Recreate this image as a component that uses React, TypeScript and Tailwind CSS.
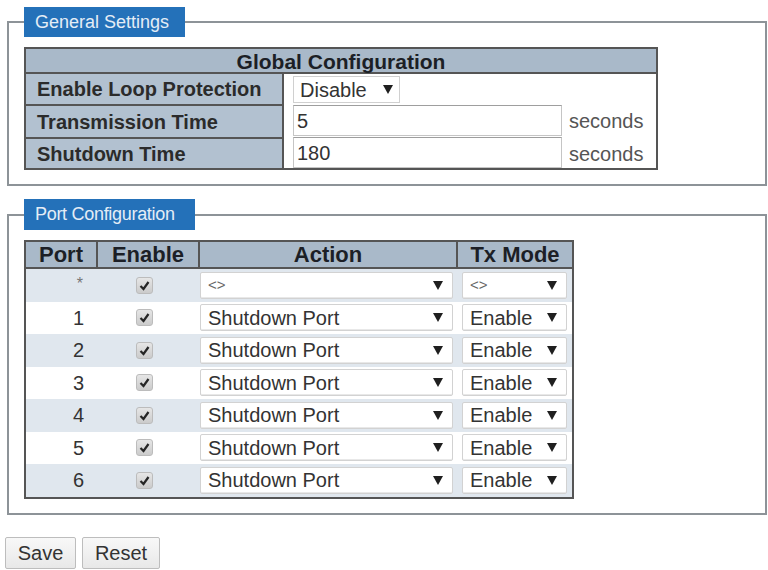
import React from "react";

const ports = ["1", "2", "3", "4", "5", "6"];

function Arrow() {
  return (
    <svg width="10" height="9" viewBox="0 0 10 9" className="shrink-0">
      <path d="M0 0h10L5 9z" fill="#1f1f1f" />
    </svg>
  );
}

function FakeSelect({ value, width, muted }: { value: string; width: string; muted?: boolean }) {
  return (
    <div
      className={`${width} h-[27px] flex items-center justify-between bg-white border border-[#d2d2d2] rounded-[2px] pl-[7px] pr-[9px] shadow-[inset_0_-1px_0_#e8e8e8]`}
    >
      <span className={muted ? "text-[15px] text-[#666]" : "text-[20px] text-[#333] leading-none"}>{value}</span>
      <Arrow />
    </div>
  );
}

function Check() {
  return (
    <span className="w-[17px] h-[17px] rounded-[3px] border border-[#bcbcbc] bg-[linear-gradient(#e6e6e6,#cbcbcb)] flex items-center justify-center">
      <svg width="13" height="13" viewBox="0 0 13 13">
        <path d="M2.5 7l3 3L10.5 3" stroke="#262626" strokeWidth="2.2" fill="none" />
      </svg>
    </span>
  );
}

export default function App() {
  return (
    <div className="w-[768px] h-[570px] overflow-hidden bg-white pt-[7px] pl-[7px] font-['Liberation_Sans',Arial,sans-serif] text-[#333]">
      {/* General Settings */}
      <fieldset className="w-[760px] border-2 border-[#8d9398] px-[15px] pt-[10px] pb-[14px]">
        <legend className="w-[161px] h-[30px] leading-[30px] pl-[11px] bg-[#2471b9] text-[#e4edf6] text-[18px]">
          General Settings
        </legend>
        <div className="w-[634px] border-2 border-[#555]">
          <div className="h-[25px] leading-[25px] bg-[#a9b9c9] border-b-2 border-[#555] text-center font-bold text-[21px] text-[#1c1f26]">
            Global Configuration
          </div>
          <div className="flex h-[30px]">
            <div className="w-[258px] bg-[#b2c1d0] border-r-2 border-[#555] pl-[11px] flex items-center font-bold text-[20px] text-[#2b2b2b]">
              Enable Loop Protection
            </div>
            <div className="flex-1 pl-[9px] pt-[2px]">
              <div className="w-[107px] h-[27px] flex items-center justify-between bg-white border border-[#d0d0d0] pl-[6px] pr-[6px]">
                <span className="text-[20px] leading-none">Disable</span>
                <Arrow />
              </div>
            </div>
          </div>
          <div className="flex h-[33px]">
            <div className="w-[258px] bg-[#b2c1d0] border-r-2 border-t-2 border-[#555] pl-[11px] flex items-center font-bold text-[20px] text-[#2b2b2b]">
              Transmission Time
            </div>
            <div className="flex-1 pl-[9px] flex items-center">
              <div className="w-[269px] h-[31px] border border-[#c5c5c5] border-t-[#9e9e9e] pl-[3px] flex items-center text-[20px]">
                5
              </div>
              <span className="ml-[7px] text-[20px] text-[#555]">seconds</span>
            </div>
          </div>
          <div className="flex h-[31px]">
            <div className="w-[258px] bg-[#b2c1d0] border-r-2 border-t-2 border-[#555] pl-[11px] flex items-center font-bold text-[20px] text-[#2b2b2b]">
              Shutdown Time
            </div>
            <div className="flex-1 pl-[9px] flex items-start">
              <div className="w-[269px] h-[31px] border border-[#c5c5c5] border-t-[#9e9e9e] pl-[3px] flex items-center text-[20px]">
                180
              </div>
              <span className="ml-[7px] mt-[2px] text-[20px] text-[#555]">seconds</span>
            </div>
          </div>
        </div>
      </fieldset>

      {/* Port Configuration */}
      <fieldset className="w-[760px] mt-[13px] border-2 border-[#8d9398] px-[15px] pt-[10px] pb-[14px]">
        <legend className="w-[171px] h-[31px] leading-[31px] pl-[11px] bg-[#2471b9] text-[#e4edf6] text-[18px] tracking-[-0.3px]">
          Port Configuration
        </legend>
        <div className="w-[550px] border-2 border-[#555]">
          <div className="grid grid-cols-[70px_102px_258px_116px] h-[27px] bg-[#a9b9c9] border-b-2 border-[#555] font-bold text-[22px] text-[#1c1f26] leading-[25px] text-center">
            <div>Port</div>
            <div className="border-l-2 border-[#555]">Enable</div>
            <div className="border-l-2 border-[#555]">Action</div>
            <div className="border-l-2 border-[#555]">Tx Mode</div>
          </div>
          <div className="grid grid-cols-[70px_102px_258px_116px] h-[32.5px] bg-[#e0e7ee] items-center">
            <div className="text-right pr-[13px] text-[16px] text-[#777] self-start pt-[3px]">*</div>
            <div className="flex justify-center pr-[6px]"><Check /></div>
            <div className="pl-[2px]"><FakeSelect value="<>" width="w-[253px]" muted /></div>
            <div className="pl-[6px]"><FakeSelect value="<>" width="w-[105px]" muted /></div>
          </div>
          {ports.map((p, i) => (
            <div
              key={p}
              className={`grid grid-cols-[70px_102px_258px_116px] h-[32.5px] items-center ${
                i % 2 === 0 ? "bg-white" : "bg-[#e0e7ee]"
              }`}
            >
              <div className="text-right pr-[12px] text-[20px] text-[#333]">{p}</div>
              <div className="flex justify-center pr-[6px]"><Check /></div>
              <div className="pl-[2px]"><FakeSelect value="Shutdown Port" width="w-[253px]" /></div>
              <div className="pl-[6px]"><FakeSelect value="Enable" width="w-[105px]" /></div>
            </div>
          ))}
        </div>
      </fieldset>

      <div className="flex gap-[6px] mt-[22px] -ml-[2px]">
        <button className="w-[71px] h-[32px] border border-[#bdbdbd] rounded-[2px] bg-[linear-gradient(#f8f8f8,#e8e8e8)] text-[20px] text-[#333]">
          Save
        </button>
        <button className="w-[78px] h-[32px] border border-[#bdbdbd] rounded-[2px] bg-[linear-gradient(#f8f8f8,#e8e8e8)] text-[20px] text-[#333]">
          Reset
        </button>
      </div>
    </div>
  );
}
